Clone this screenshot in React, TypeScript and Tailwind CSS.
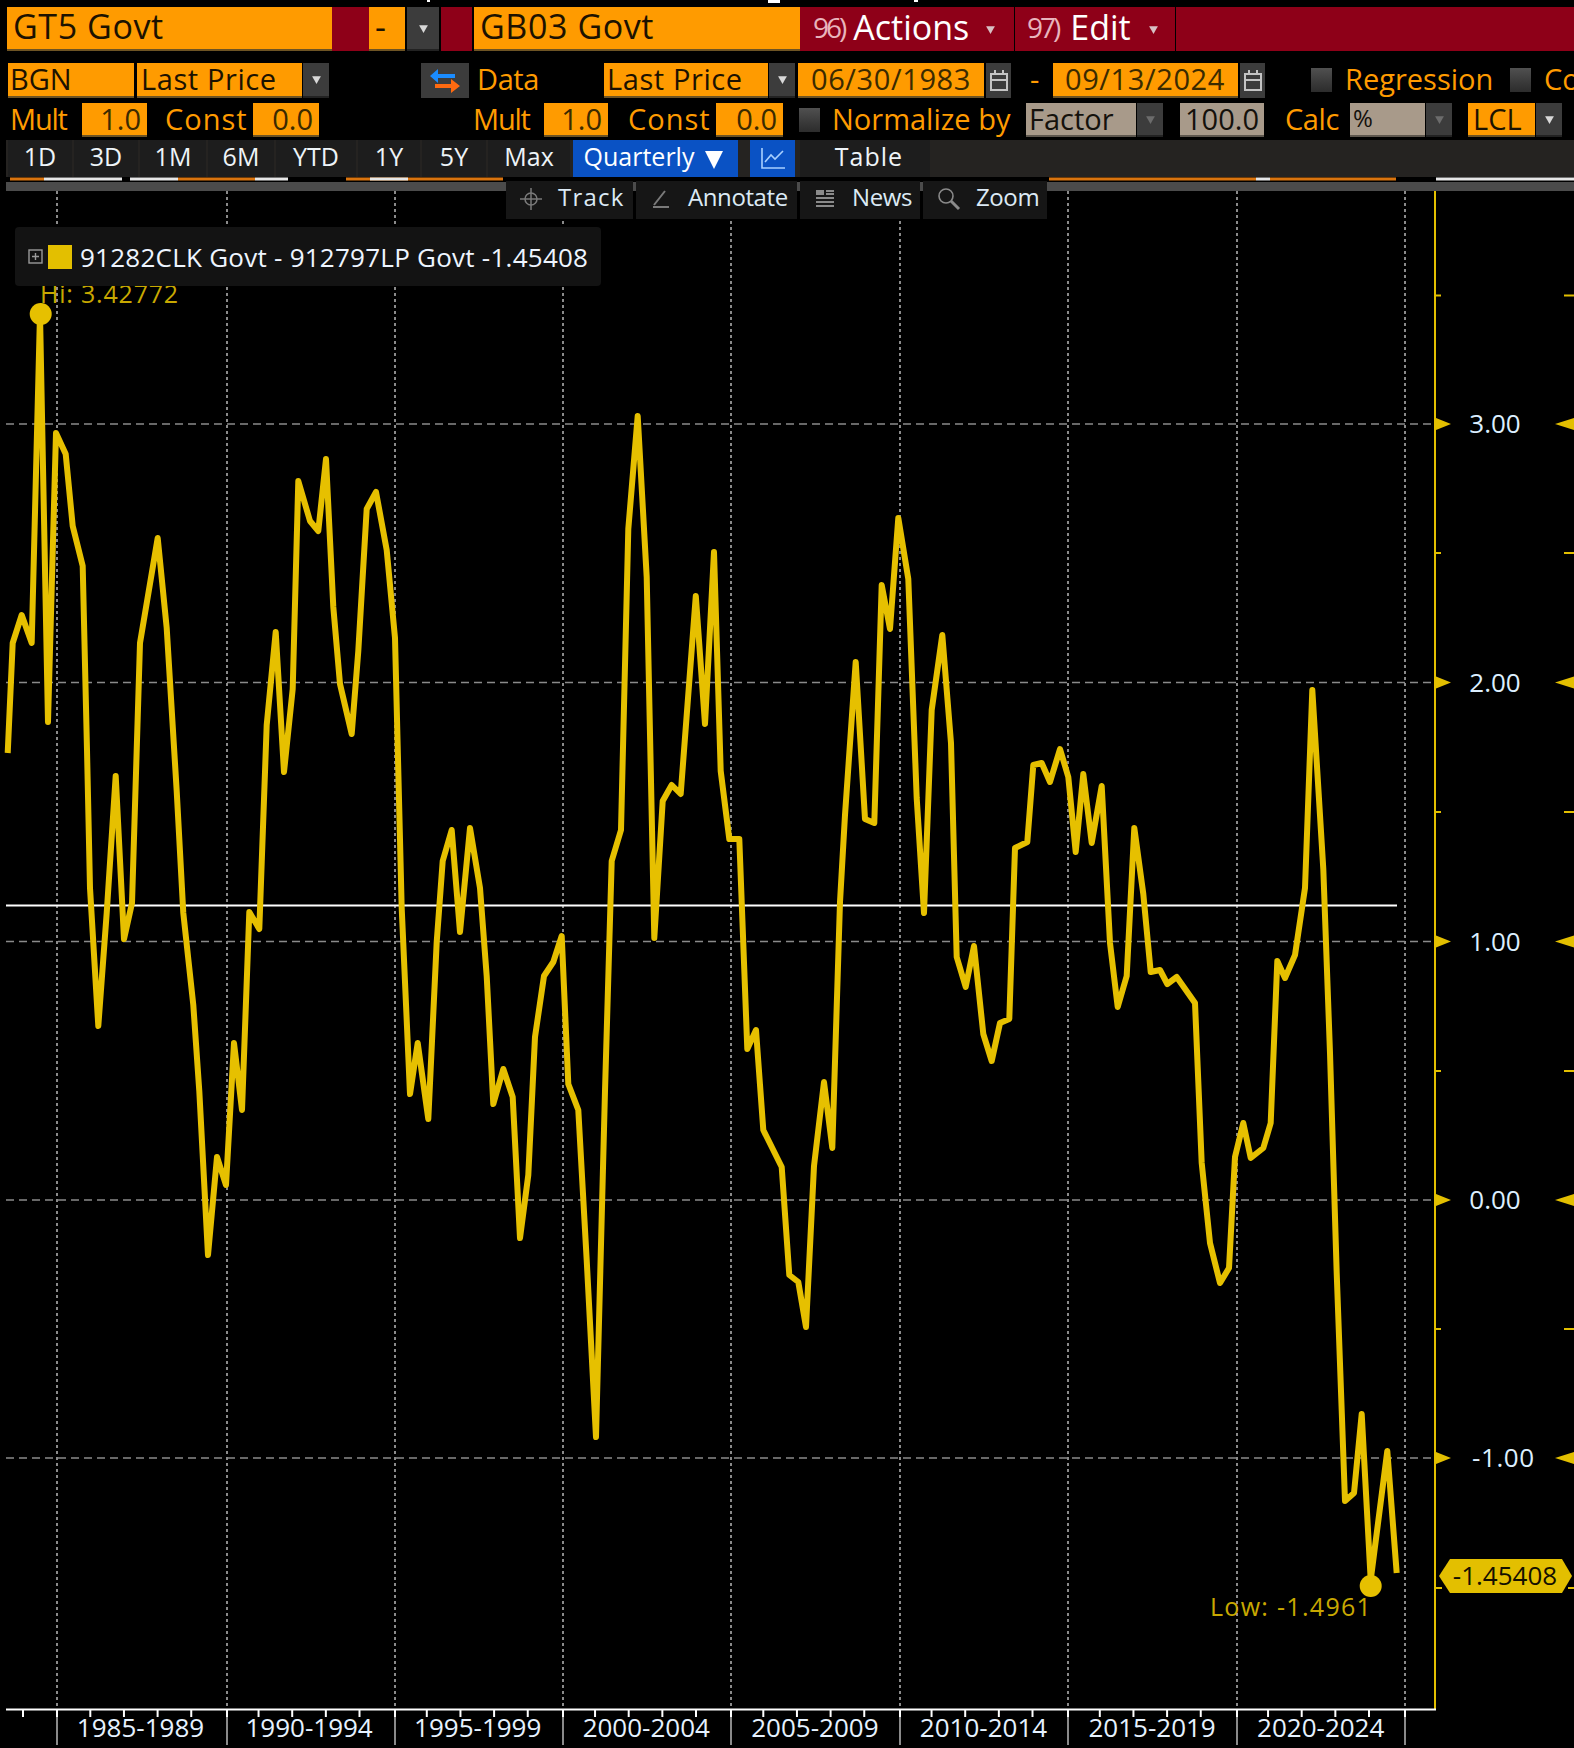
import type { ReactNode } from "react";

const line = [
  [7.7, 752], [12.7, 642], [21.7, 614], [31.7, 642], [40, 313], [48, 721], [56, 432], [65.7, 453], [72.7, 525], [82.7, 565], [87, 749],
  [90, 887], [98.3, 1025], [106.7, 912], [115.7, 775], [124, 938], [132, 902], [140, 642], [157.7, 537], [166.7, 627], [176.7, 790],
  [183.3, 912], [193.3, 1004], [199.3, 1090], [208, 1254], [217, 1156], [226, 1184], [234, 1042], [242, 1109], [249.3, 911], [259.3, 928],
  [266.7, 724], [275.7, 631], [284, 771], [292.7, 688], [298.3, 480], [310, 520], [318.3, 530], [326, 458], [333.3, 606], [340, 683],
  [351.7, 733], [358.3, 650], [366.7, 508], [376, 491], [386.7, 549], [395, 637], [401.7, 907], [410, 1093], [417.7, 1042], [428.3, 1118],
  [436.7, 941], [442.7, 860], [451.7, 829], [460, 931], [470, 827], [480, 887], [486.7, 975], [493.3, 1103], [503.3, 1068], [512.7, 1096],
  [520, 1237], [528.3, 1174], [535, 1036], [544, 975], [553.3, 961], [561.7, 935], [568.3, 1083], [578.3, 1109], [586.7, 1259], [596, 1436],
  [605, 1090], [611.7, 860], [621, 829], [628.3, 528], [637.7, 415], [646.7, 576], [654.3, 937], [662.7, 800], [671.7, 784], [680.7, 793],
  [695.8, 595], [705, 723], [714, 551], [720.7, 770], [729.3, 838], [739.3, 838], [747.3, 1048], [756, 1029], [763.3, 1129], [781.7, 1166],
  [789.3, 1274], [798.3, 1281], [806, 1326], [814, 1165], [824, 1081], [832.3, 1147], [840, 901], [845, 814], [855.7, 661], [865, 818],
  [874.3, 822], [881.7, 584], [890, 628], [898.3, 517], [908.3, 578], [916.7, 797], [924, 912], [931.7, 709], [942.3, 634], [951, 742],
  [956.7, 956], [965.7, 986], [974, 945], [983.3, 1033], [991.7, 1060], [1000, 1022], [1009.3, 1018], [1015, 847], [1027.3, 841],
  [1033.3, 764], [1041.7, 762], [1050, 781], [1060, 748], [1068.3, 776], [1075.7, 851], [1083.3, 773], [1091.7, 842], [1101.7, 785],
  [1110, 942], [1117.7, 1006], [1126.7, 975], [1134.3, 827], [1143.3, 893], [1150.7, 971], [1160, 969], [1167.3, 983], [1176.7, 976],
  [1195, 1002], [1201.7, 1162], [1210, 1242], [1220, 1282], [1229, 1267], [1235, 1156], [1243.3, 1122], [1250.7, 1157], [1263.3, 1147],
  [1270.7, 1122], [1277.3, 960], [1285, 977], [1295, 954], [1305, 887], [1312.3, 689], [1323.3, 868], [1330, 1052], [1336.7, 1272],
  [1345, 1500], [1354, 1492], [1361.7, 1413], [1370.7, 1579], [1387.3, 1450], [1396.7, 1572],
];

const gridX = [57, 227, 395, 563, 731, 900, 1068, 1237, 1405];
const gridY = [423, 681.5, 940.5, 1199, 1457];
const minorY = [294.5, 552, 811, 1070, 1328];
const yLabels = ["3.00", "2.00", "1.00", "0.00", "-1.00"];
const periods = ["1985-1989", "1990-1994", "1995-1999", "2000-2004", "2005-2009", "2010-2014", "2015-2019", "2020-2024"];
const tabs = [
  { label: "1D", w: "w-[64px]" },
  { label: "3D", w: "w-[64px]" },
  { label: "1M", w: "w-[66px]" },
  { label: "6M", w: "w-[66px]" },
  { label: "YTD", w: "w-[80px]" },
  { label: "1Y", w: "w-[62px]" },
  { label: "5Y", w: "w-[64px]" },
  { label: "Max", w: "w-[82px]" },
];

function Field({ className, children }: { className: string; children?: ReactNode }) {
  return <div className={`flex items-center whitespace-nowrap bg-[#ff9b00] text-[#1c1200] border-b-2 border-[#6e5424] ${className}`}>{children}</div>;
}

function TanField({ className, children }: { className: string; children?: ReactNode }) {
  return <div className={`flex items-center whitespace-nowrap bg-[#a89a8a] text-[#14110c] border-b-2 border-[#5e574e] ${className}`}>{children}</div>;
}

function Caret({ className = "fill-[#d8d8d8]" }: { className?: string }) {
  return (
    <svg width="11" height="11" viewBox="0 0 10 10" className={className}>
      <path d="M1 2h8L5 9z" />
    </svg>
  );
}

function Drop({ className, dim }: { className: string; dim?: boolean }) {
  return (
    <div className={`flex items-center justify-center bg-[#3c3c3c] border-b-2 border-[#222] ${className}`}>
      <Caret className={dim ? "fill-[#6c6c6c]" : "fill-[#d8d8d8]"} />
    </div>
  );
}

function Calendar({ className }: { className: string }) {
  return (
    <div className={`flex items-center justify-center bg-[#3c3c3c] ${className}`}>
      <svg width="18" height="22" viewBox="0 0 18 22" fill="none" stroke="#c4c4c4" strokeWidth="2">
        <rect x="1" y="4" width="16" height="16" />
        <path d="M1 10h16M5 0v5M13 0v5" />
      </svg>
    </div>
  );
}

function Check({ className }: { className: string }) {
  return <div className={`h-[24px] w-[21px] bg-gradient-to-b from-[#505050] to-[#2c2c2c] ${className}`} />;
}

function Tool({ className, icon, label }: { className: string; icon: ReactNode; label: string }) {
  return (
    <div className={`flex items-center bg-[#161616] pb-[2px] text-[24px] text-[#dceaf5] ${className}`}>
      {icon}
      <span className="pb-[4px]">{label}</span>
    </div>
  );
}

export default function App() {
  return (
    <div className="flex h-[1748px] w-[1574px] flex-col overflow-hidden bg-black font-['Open_Sans',sans-serif]">
      {/* top edge of the window above */}
      <div className="flex h-[7px] shrink-0 items-start">
        <div className="ml-[427px] h-[2px] w-[3px] bg-white" />
        <div className="ml-[338px] h-[3px] w-[12px] bg-white" />
        <div className="ml-[134px] h-[2px] w-[4px] bg-white" />
      </div>

      {/* security row */}
      <div className="flex h-[44px] shrink-0 pl-[7px] text-[34px] leading-none">
        <Field className="w-[325px] pb-[4px] pl-[6px] tracking-[0.6px]">GT5 Govt</Field>
        <div className="w-[37px] bg-[#8e0018]" />
        <Field className="w-[36px] pb-[4px] pl-[6px]">-</Field>
        <Drop className="ml-[2px] w-[32px]" />
        <div className="ml-[2px] w-[31px] bg-[#8e0018]" />
        <Field className="ml-[2px] w-[326px] pb-[4px] pl-[6px] tracking-[0.6px]">GB03 Govt</Field>
        <div className="flex w-[214px] items-center bg-[#8e0018] pb-[4px] pl-[13px] text-white">
          <span className="mr-[9px] text-[28px] tracking-[-3px] text-[#e8b4bc]">96)</span>
          Actions
          <Caret className="ml-[16px] mt-[4px] fill-[#d8c0c4]" />
        </div>
        <div className="ml-[1px] flex w-[160px] items-center bg-[#8e0018] pb-[4px] pl-[12px] text-white">
          <span className="mr-[12px] text-[28px] tracking-[-3px] text-[#e8b4bc]">97)</span>
          Edit
          <Caret className="ml-[17px] mt-[4px] fill-[#d8c0c4]" />
        </div>
        <div className="ml-[1px] flex-1 bg-[#8e0018]" />
      </div>

      {/* field row, runs past the right edge of the window */}
      <div className="mt-[12px] flex h-[35px] shrink-0 text-[29px] leading-none text-[#ff9b00] [&>*]:shrink-0">
        <Field className="ml-[8px] w-[126px] pb-[2px] pl-[2px]">BGN</Field>
        <Field className="ml-[3px] w-[165px] pb-[2px] pl-[4px] tracking-[0.6px]">Last Price</Field>
        <Drop className="ml-[1px] w-[26px]" />
        <div className="ml-[92px] flex w-[48px] items-center justify-center bg-[#3c3c3c]">
          <svg width="32" height="26" viewBox="0 0 32 26">
            <path d="M9 1v5h17v4H9v5L1 8z" fill="#1a8cff" />
            <path d="M22 11v5H6v4h16v5l9-7z" fill="#ff6a10" />
          </svg>
        </div>
        <span className="ml-[8px] w-[127px] leading-[31px] tracking-[-0.4px]">Data</span>
        <Field className="w-[164px] pb-[2px] pl-[3px] tracking-[0.6px]">Last Price</Field>
        <Drop className="ml-[1px] w-[26px]" />
        <Field className="ml-[3px] w-[186px] pb-[2px] pl-[13px] tracking-[0.6px] text-[#3a2a00]">06/30/1983</Field>
        <Calendar className="ml-[2px] w-[25px]" />
        <span className="ml-[19px] w-[23px] leading-[31px]">-</span>
        <Field className="w-[185px] pb-[2px] pl-[12px] tracking-[0.6px] text-[#3a2a00]">09/13/2024</Field>
        <Calendar className="ml-[2px] w-[25px]" />
        <Check className="ml-[46px] mt-[5px]" />
        <span className="ml-[13px] w-[165px] leading-[31px]">Regression</span>
        <Check className="mt-[5px]" />
        <span className="ml-[13px] leading-[31px]">Co</span>
      </div>

      {/* mult, const, normalize row */}
      <div className="mt-[5px] flex h-[34px] shrink-0 text-[29px] leading-none text-[#ff9b00]">
        <span className="ml-[10px] w-[72px] leading-[31px] tracking-[-1.2px]">Mult</span>
        <Field className="w-[65px] justify-end pb-[2px] pr-[6px] text-[#3a2a00]">1.0</Field>
        <span className="ml-[18px] w-[88px] leading-[31px] tracking-[1px]">Const</span>
        <Field className="w-[66px] justify-end pb-[2px] pr-[6px] text-[#3a2a00]">0.0</Field>
        <span className="ml-[154px] w-[71px] leading-[31px] tracking-[-1.2px]">Mult</span>
        <Field className="w-[64px] justify-end pb-[2px] pr-[6px] text-[#3a2a00]">1.0</Field>
        <span className="ml-[20px] w-[88px] leading-[31px] tracking-[1px]">Const</span>
        <Field className="w-[67px] justify-end pb-[2px] pr-[6px] text-[#3a2a00]">0.0</Field>
        <Check className="ml-[16px] mt-[5px]" />
        <span className="ml-[12px] w-[194px] leading-[31px]">Normalize by</span>
        <TanField className="w-[110px] pb-[2px] pl-[3px]">Factor</TanField>
        <Drop className="ml-[1px] w-[26px]" dim />
        <TanField className="ml-[17px] w-[84px] justify-center pb-[2px]">100.0</TanField>
        <span className="ml-[21px] w-[65px] leading-[31px] tracking-[-0.4px]">Calc</span>
        <TanField className="w-[75px] pb-[2px] pl-[3px] text-[24px]">%</TanField>
        <Drop className="ml-[1px] w-[26px]" dim />
        <Field className="ml-[16px] w-[67px] pb-[2px] pl-[5px]">LCL</Field>
        <Drop className="ml-[1px] w-[26px]" />
      </div>

      {/* range tabs */}
      <div className="ml-[6px] mt-[3px] flex h-[37px] shrink-0 gap-[2px] bg-[#252321] pl-[2px] text-[25px] leading-none text-[#eef4f8]">
        {tabs.map((tab) => (
          <div key={tab.label} className={`flex items-center justify-center bg-[#1d1d1d] pb-[4px] ${tab.w}`}>
            {tab.label}
          </div>
        ))}
        <div className="ml-[1px] flex w-[165px] items-center justify-center gap-[10px] bg-[#0a52c4] pb-[4px] pr-[3px] text-white">
          Quarterly
          <svg width="20" height="20" viewBox="0 0 20 20" className="mt-[4px] fill-white">
            <path d="M1 2h18L10 20z" />
          </svg>
        </div>
        <div className="ml-[10px] flex w-[45px] items-center justify-center bg-[#0a52c4]">
          <svg width="26" height="24" viewBox="0 0 26 24" fill="none" stroke="#a8d0ff" strokeWidth="1.6">
            <path d="M2 1v20h23M5 15l6-7 4 4 8-8" />
          </svg>
        </div>
        <div className="ml-[3px] flex w-[130px] items-center justify-center bg-[#1d1d1d] pb-[4px] pl-[8px] tracking-[1px]">Table</div>
      </div>

      {/* overview strip */}
      <div className="relative ml-[6px] h-[14px] shrink-0">
        <svg width="1568" height="5" viewBox="0 0 1568 5" className="block">
          <path d="M4 2h34M172 2h77M340 2h157M1043 2h207M1264 2h126" stroke="#d9740f" strokeWidth="3" />
          <path d="M38 2h78M124 2h48M249 2h33M364 2h38M1250 2h14M1430 2h138" stroke="#e6e6e6" strokeWidth="3" />
        </svg>
        <div className="flex h-[9px] items-center justify-center bg-[#4b4b4b] pl-[440px]">
          <div className="h-[5px] w-[28px] border-y border-[#9a9a9a]" />
        </div>
      </div>

      {/* chart */}
      <div className="relative flex-1">
        <svg viewBox="0 190 1574 1558" className="block h-full w-full">
          {gridX.map((x) => (
            <line key={x} x1={x} x2={x} y1="190" y2="1708" stroke="#8a8a8a" strokeWidth="2" strokeDasharray="3 3" />
          ))}
          {gridY.map((y) => (
            <line key={y} x1="6" x2="1436" y1={y} y2={y} stroke="#8a8a8a" strokeWidth="1.5" strokeDasharray="8 5" />
          ))}
          <line x1="6" x2="1397" y1="904.5" y2="904.5" stroke="#fff" strokeWidth="2" />

          {/* axes */}
          <line x1="1435" x2="1435" y1="190" y2="1709" stroke="#e3bf00" strokeWidth="2" />
          <line x1="6" x2="1436" y1="1708.5" y2="1708.5" stroke="#fff" strokeWidth="2" />
          {Array.from({ length: 41 }, (_, i) => 23 + i * 33.65).map((x, i) =>
            (i - 1) % 5 === 0 ? null : <line key={i} x1={x} x2={x} y1="1708" y2="1716" stroke="#fff" strokeWidth="2" />,
          )}
          {gridX.map((x) => (
            <g key={x}>
              <line x1={x} x2={x} y1="1708" y2="1716" stroke="#fff" strokeWidth="2" />
              <line x1={x} x2={x} y1="1716" y2="1744" stroke="#8a8a8a" strokeWidth="2" />
            </g>
          ))}
          {minorY.map((y) => (
            <g key={y} stroke="#e3bf00" strokeWidth="2">
              <line x1="1435" x2="1441" y1={y} y2={y} />
              <line x1="1564" x2="1574" y1={y} y2={y} />
            </g>
          ))}
          {gridY.map((y, i) => (
            <g key={y}>
              <path d={`M1436 ${y - 6}L1451 ${y}L1436 ${y + 6}z`} fill="#e3bf00" />
              <path d={`M1574 ${y - 6}L1555 ${y}L1574 ${y + 6}z`} fill="#e3bf00" />
              <text x={i === 4 ? 1472 : 1495} y={y + 9} textAnchor={i === 4 ? "start" : "middle"} fontSize="26" fill="#dcefff" letterSpacing={i === 4 ? "0.6" : "0"}>
                {yLabels[i]}
              </text>
            </g>
          ))}
          {periods.map((p, i) => (
            <text key={p} x={140.5 + i * 168.6} y="1736" textAnchor="middle" fontSize="26" fill="#e6f2ff">
              {p}
            </text>
          ))}

          {/* series */}
          <polyline points={line.map((p) => p.join(",")).join(" ")} fill="none" stroke="#e6c000" strokeWidth="6" strokeLinejoin="round" />
          <circle cx="40.7" cy="313" r="11" fill="#e6c000" />
          <circle cx="1370.7" cy="1585" r="11" fill="#e6c000" />
          <text x="40" y="302" fontSize="25" fill="#c8a800" letterSpacing="0.8">Hi: 3.42772</text>
          <text x="1210" y="1615" fontSize="25" fill="#c8a800" letterSpacing="1.3">Low: -1.4961</text>

          {/* last value tag */}
          <line x1="1436" x2="1442" y1="1587" y2="1587" stroke="#e3bf00" strokeWidth="2" />
          <line x1="1568" x2="1574" y1="1587" y2="1587" stroke="#e3bf00" strokeWidth="2" />
          <path d="M1439 1575L1450 1558H1562L1572 1575L1562 1592H1450z" fill="#e3bf00" />
          <text x="1505" y="1584" textAnchor="middle" fontSize="26" fill="#141000">-1.45408</text>
        </svg>

        {/* chart tools */}
        <div className="absolute left-[506px] top-[-10px] flex h-[38px] gap-[3px] leading-none">
          <Tool
            className="w-[127px] gap-[16px] pl-[14px] tracking-[1.2px]"
            label="Track"
            icon={
              <svg width="22" height="22" viewBox="0 0 22 22" fill="none" stroke="#7a7a7a" strokeWidth="1.5">
                <circle cx="11" cy="11" r="6" />
                <path d="M11 0v22M0 11h22" />
              </svg>
            }
          />
          <Tool
            className="w-[161px] gap-[17px] pl-[15px] tracking-[-0.4px]"
            label="Annotate"
            icon={
              <svg width="20" height="20" viewBox="0 0 20 20" fill="none" stroke="#7a7a7a" strokeWidth="2">
                <path d="M14 2L3 16M2 18h16" />
              </svg>
            }
          />
          <Tool
            className="w-[120px] gap-[17px] pl-[15px] tracking-[-0.4px]"
            label="News"
            icon={
              <svg width="20" height="20" viewBox="0 0 20 20" fill="#8a8a8a">
                <path d="M1 1h8v5H1zM11 1h8v2h-8zM11 4h8v2h-8zM1 8h18v2H1zM1 12h18v2H1zM1 16h18v2H1z" />
              </svg>
            }
          />
          <Tool
            className="w-[124px] gap-[15px] pl-[14px] tracking-[-0.4px]"
            label="Zoom"
            icon={
              <svg width="24" height="24" viewBox="0 0 24 24" fill="none" stroke="#8a8a8a" strokeWidth="1.6">
                <circle cx="9" cy="9" r="7" />
                <path d="M14 14l8 8" strokeWidth="3" />
              </svg>
            }
          />
        </div>

        {/* legend */}
        <div className="absolute left-[15px] top-[36px] flex h-[59px] w-[586px] items-center rounded-sm bg-[#131313] pl-[13px] text-[26px] leading-none tracking-[0.25px] text-[#eef5ff]">
          <svg width="15" height="15" viewBox="0 0 15 15" fill="none" stroke="#9a9a9a" strokeWidth="1.4">
            <rect x="1" y="1" width="13" height="13" />
            <path d="M4 7.5h7M7.5 4v7" />
          </svg>
          <div className="ml-[5px] mr-[8px] h-[24px] w-[24px] bg-[#e3bf00]" />
          <span className="whitespace-nowrap">91282CLK Govt - 912797LP Govt -1.45408</span>
        </div>
      </div>
    </div>
  );
}
